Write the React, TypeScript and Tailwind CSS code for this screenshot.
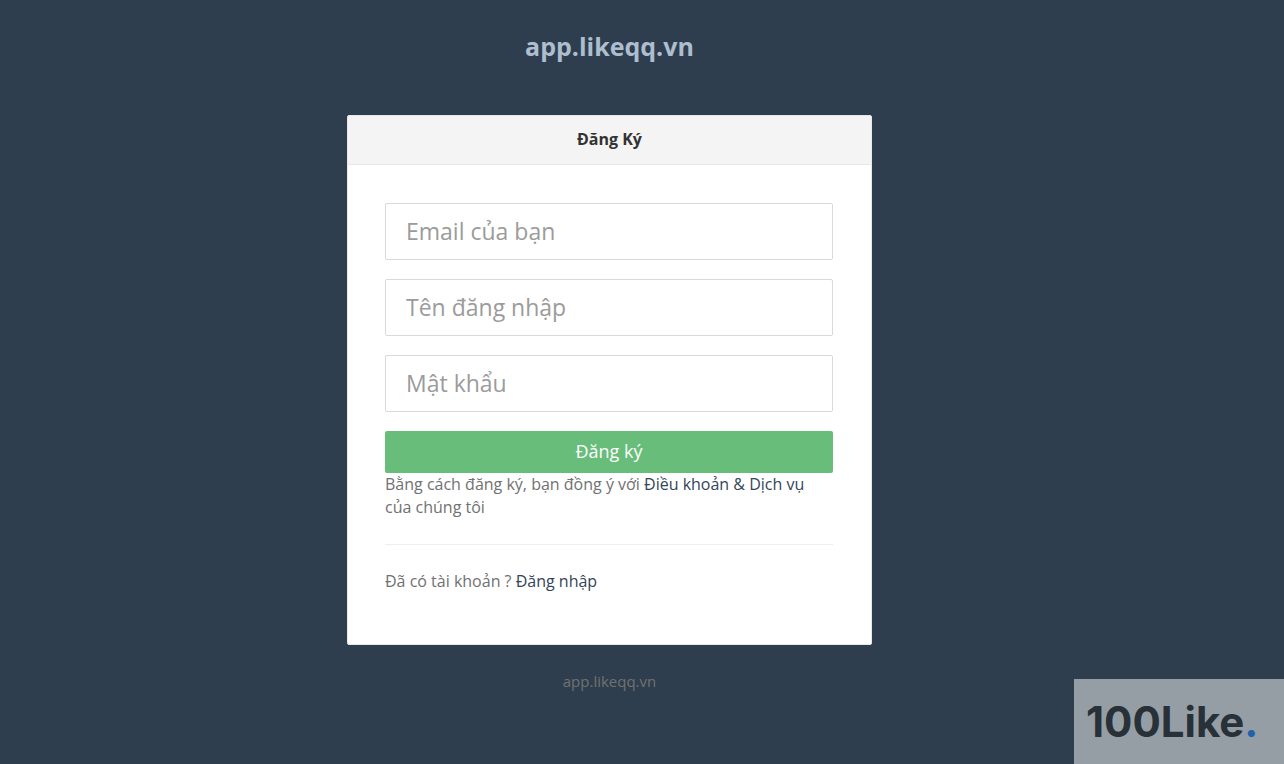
type Field = {
  id: string;
  label: string;
  type: string;
};

const fields: Field[] = [
  { id: "email", label: "Email của bạn", type: "email" },
  { id: "username", label: "Tên đăng nhập", type: "text" },
  { id: "password", label: "Mật khẩu", type: "password" },
];

function TextField({ id, label, type }: Field) {
  return (
    <input
      id={id}
      name={id}
      type={type}
      aria-label={label}
      placeholder={label}
      className="block h-[57px] w-full rounded-xs border border-[#d9d9d9] bg-white px-5 pb-0.5 text-[23px] text-[#717171] outline-none placeholder:text-[#9b9b9b] focus:border-[#67bf7b]"
    />
  );
}

function Watermark() {
  return (
    <div className="fixed right-0 bottom-0 flex h-[85px] w-[210px] items-center bg-[#969ea5] pl-3 font-['Inter','Open_Sans',sans-serif] text-[42px] font-bold text-[#283138]">
      <span>
        100Like<span className="text-[#2460ac]">.</span>
      </span>
    </div>
  );
}

export default function App() {
  return (
    <div className="min-h-screen bg-[#2e3e4e] pr-[65px] font-['Open_Sans',sans-serif] text-base leading-[23px] text-[#717171]">
      <main className="mx-auto w-full max-w-[525px]">
        <a
          href="#"
          className="block pt-7 text-center text-[25px] leading-9 font-bold text-[#adbece]"
        >
          app.likeqq.vn
        </a>

        <section className="mt-[51px] rounded-xs border border-[#e8e8e8] bg-white">
          <header className="border-b border-[#e8e8e8] bg-[#f4f4f4] pt-[11px] pb-[13px] text-center">
            <h1 className="leading-6 font-bold text-[#333333]">Đăng Ký</h1>
          </header>

          <form className="pt-[38px] pr-[38px] pb-[51px] pl-[37px]">
            <div className="flex flex-col gap-[19px]">
              {fields.map((field) => (
                <TextField key={field.id} {...field} />
              ))}
              <button
                type="submit"
                className="h-[42px] w-full rounded-xs bg-[#67bd79] pb-0.5 text-lg font-medium text-white"
              >
                Đăng ký
              </button>
            </div>
            <p>
              Bằng cách đăng ký, bạn đồng ý với{" "}
              <a href="#" className="text-[#34445a]">
                Điều khoản &amp; Dịch vụ
              </a>{" "}
              của chúng tôi
            </p>
            <hr className="my-[25px] border-[#eeeeee]" />
            <p>
              Đã có tài khoản ?{" "}
              <a href="#" className="text-[#34445a]">
                Đăng nhập
              </a>
            </p>
          </form>
        </section>

        <footer className="py-[25px] text-center text-[15px]">
          app.likeqq.vn
        </footer>
      </main>
      <Watermark />
    </div>
  );
}
